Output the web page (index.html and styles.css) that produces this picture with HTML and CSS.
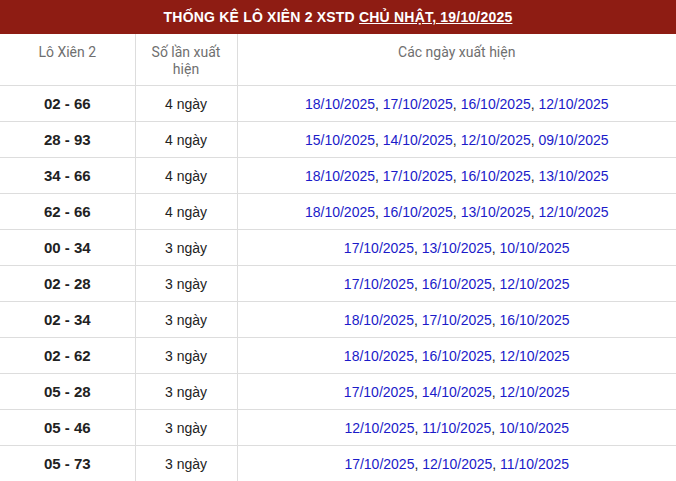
FILE: index.html
```html
<!DOCTYPE html>
<html lang="vi">
<head>
<meta charset="utf-8">
<link rel="stylesheet" href="styles.css">
</head>
<body>
<div class="box">
  <div class="title">THỐNG KÊ LÔ XIÊN 2 XSTD <a class="tlink">CHỦ NHẬT, 19/10/2025</a></div>
  <table class="tbl">
    <colgroup><col class="c1"><col class="c2"><col class="c3"></colgroup>
    <thead>
      <tr><th>Lô Xiên 2</th><th>Số lần xuất hiện</th><th>Các ngày xuất hiện</th></tr>
    </thead>
    <tbody>
      <tr><td class="pair">02 - 66</td><td>4 ngày</td><td><a>18/10/2025</a>, <a>17/10/2025</a>, <a>16/10/2025</a>, <a>12/10/2025</a></td></tr>
      <tr><td class="pair">28 - 93</td><td>4 ngày</td><td><a>15/10/2025</a>, <a>14/10/2025</a>, <a>12/10/2025</a>, <a>09/10/2025</a></td></tr>
      <tr><td class="pair">34 - 66</td><td>4 ngày</td><td><a>18/10/2025</a>, <a>17/10/2025</a>, <a>16/10/2025</a>, <a>13/10/2025</a></td></tr>
      <tr><td class="pair">62 - 66</td><td>4 ngày</td><td><a>18/10/2025</a>, <a>16/10/2025</a>, <a>13/10/2025</a>, <a>12/10/2025</a></td></tr>
      <tr><td class="pair">00 - 34</td><td>3 ngày</td><td><a>17/10/2025</a>, <a>13/10/2025</a>, <a>10/10/2025</a></td></tr>
      <tr><td class="pair">02 - 28</td><td>3 ngày</td><td><a>17/10/2025</a>, <a>16/10/2025</a>, <a>12/10/2025</a></td></tr>
      <tr><td class="pair">02 - 34</td><td>3 ngày</td><td><a>18/10/2025</a>, <a>17/10/2025</a>, <a>16/10/2025</a></td></tr>
      <tr><td class="pair">02 - 62</td><td>3 ngày</td><td><a>18/10/2025</a>, <a>16/10/2025</a>, <a>12/10/2025</a></td></tr>
      <tr><td class="pair">05 - 28</td><td>3 ngày</td><td><a>17/10/2025</a>, <a>14/10/2025</a>, <a>12/10/2025</a></td></tr>
      <tr><td class="pair">05 - 46</td><td>3 ngày</td><td><a>12/10/2025</a>, <a>11/10/2025</a>, <a>10/10/2025</a></td></tr>
      <tr><td class="pair">05 - 73</td><td>3 ngày</td><td><a>17/10/2025</a>, <a>12/10/2025</a>, <a>11/10/2025</a></td></tr>
    </tbody>
  </table>
</div>
</body>
</html>
```
FILE: styles.css
```css
html, body {
  margin: 0;
  padding: 0;
  background: #fff;
}
body {
  font-family: "Liberation Sans", Arial, sans-serif;
  font-size: 14px;
  color: #222;
}
.box {
  width: 676px;
}
.title {
  background: #8e1c13;
  color: #fff;
  font-weight: bold;
  font-size: 14px;
  letter-spacing: 0.2px;
  height: 34px;
  line-height: 34px;
  text-align: center;
}
.tlink {
  color: #fff;
  text-decoration: underline;
}
.tbl {
  width: 100%;
  border-collapse: collapse;
  table-layout: fixed;
}
.c1 { width: 135px; }
.c2 { width: 102px; }
.tbl th {
  font-weight: normal;
  color: #6f6f6f;
  font-family: Roboto, "Liberation Sans", sans-serif;
  font-size: 14px;
  line-height: 17px;
  vertical-align: top;
  padding: 10px 14px 0;
  height: 41px;
  border-right: 1px solid #ddd;
  border-bottom: 1px solid #ddd;
}
.tbl td {
  text-align: center;
  height: 35px;
  padding: 0 4px;
  border-right: 1px solid #ddd;
  border-bottom: 1px solid #ddd;
  color: #222;
}
.tbl th:last-child, .tbl td:last-child { border-right: none; }
.tbl td.pair {
  font-weight: bold;
  font-size: 15px;
}
.tbl td a {
  color: #1b1bc9;
}
```
